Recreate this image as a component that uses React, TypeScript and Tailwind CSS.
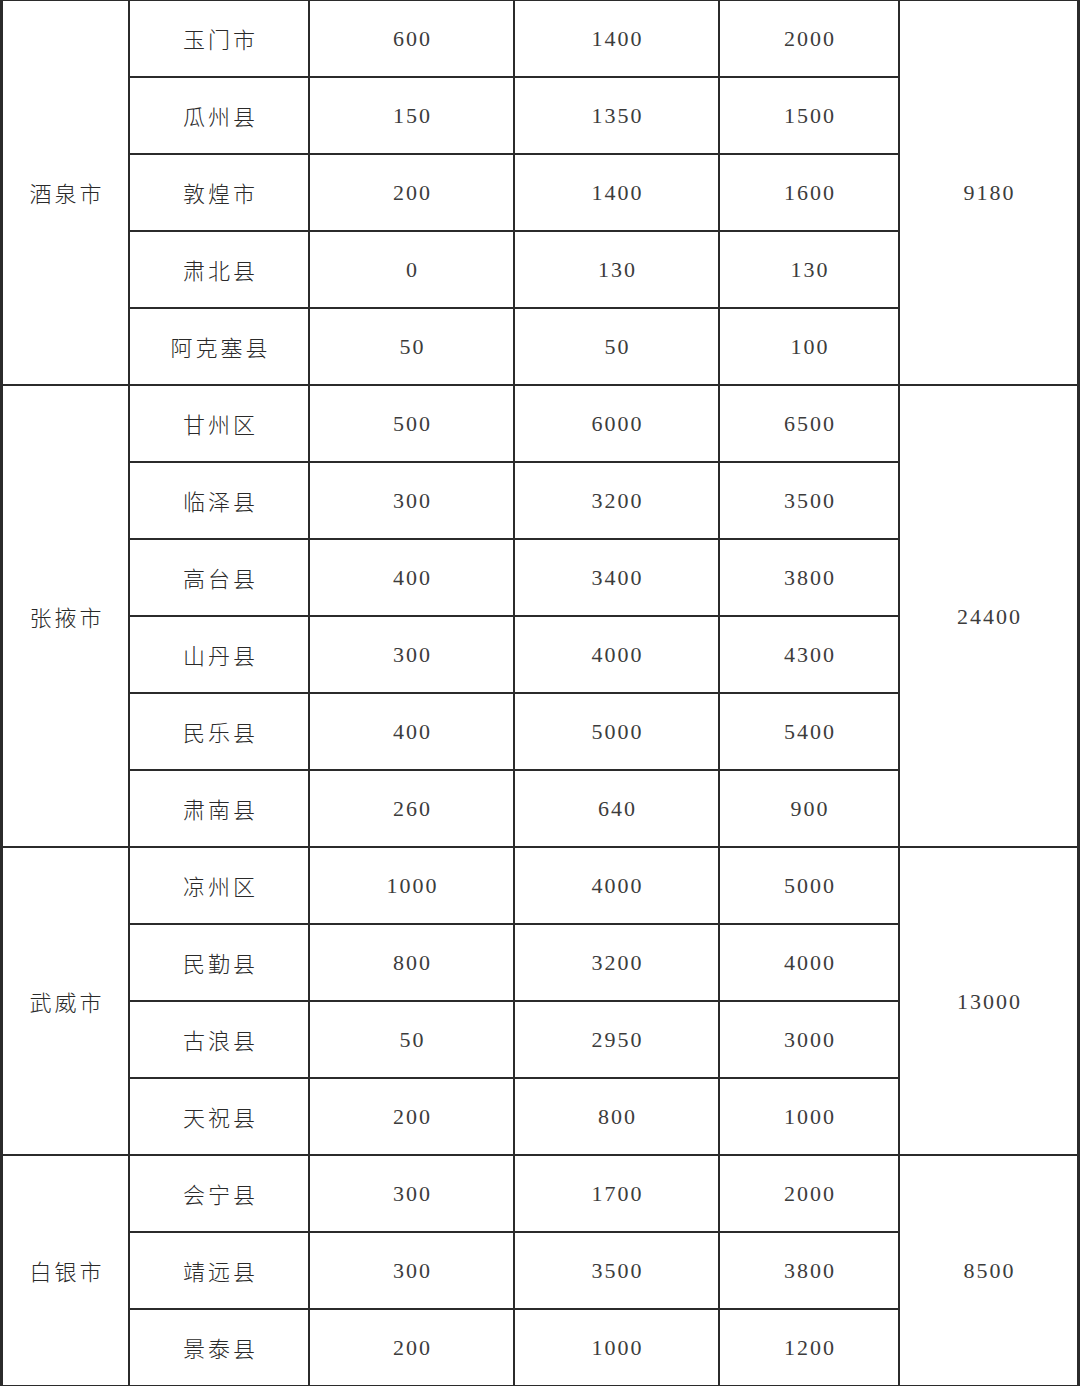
type Group = {
  city: string;
  total: string;
  rows: [string, string, string, string][];
};

const groups: Group[] = [
  {
    city: "酒泉市",
    total: "9180",
    rows: [
      ["玉门市", "600", "1400", "2000"],
      ["瓜州县", "150", "1350", "1500"],
      ["敦煌市", "200", "1400", "1600"],
      ["肃北县", "0", "130", "130"],
      ["阿克塞县", "50", "50", "100"],
    ],
  },
  {
    city: "张掖市",
    total: "24400",
    rows: [
      ["甘州区", "500", "6000", "6500"],
      ["临泽县", "300", "3200", "3500"],
      ["高台县", "400", "3400", "3800"],
      ["山丹县", "300", "4000", "4300"],
      ["民乐县", "400", "5000", "5400"],
      ["肃南县", "260", "640", "900"],
    ],
  },
  {
    city: "武威市",
    total: "13000",
    rows: [
      ["凉州区", "1000", "4000", "5000"],
      ["民勤县", "800", "3200", "4000"],
      ["古浪县", "50", "2950", "3000"],
      ["天祝县", "200", "800", "1000"],
    ],
  },
  {
    city: "白银市",
    total: "8500",
    rows: [
      ["会宁县", "300", "1700", "2000"],
      ["靖远县", "300", "3500", "3800"],
      ["景泰县", "200", "1000", "1200"],
    ],
  },
];

const cjk = "bg-white flex items-center justify-center pl-[3px] text-[22px] font-light tracking-[3px] text-[#2a2a2a] [font-family:'Noto_Sans_CJK_SC',sans-serif]";
const num = "bg-white flex items-center justify-center pl-[2px] text-[22px] tracking-[2px] text-[#3c3c3c] [font-family:'Liberation_Serif',serif]";

const spanClass: Record<number, string> = {
  3: "row-span-3",
  4: "row-span-4",
  5: "row-span-5",
  6: "row-span-6",
};

export default function App() {
  return (
    <div className="w-[1080px] h-[1386px] bg-white">
      <div className="grid grid-cols-[125px_178px_203px_203px_178px_177px] auto-rows-[75px] gap-[2px] bg-[#2b2b2b] border-l-[3px] border-r-[3px] border-t border-b border-[#2b2b2b]">
        {groups.map((g) =>
          g.rows.map((r, i) => (
            <div key={g.city + r[0]} className="contents">
              {i === 0 && (
                <div className={`${cjk} col-start-1 ${spanClass[g.rows.length]}`}>
                  {g.city}
                </div>
              )}
              <div className={`${cjk} col-start-2`}>{r[0]}</div>
              <div className={num}>{r[1]}</div>
              <div className={num}>{r[2]}</div>
              <div className={num}>{r[3]}</div>
              {i === 0 && (
                <div className={`${num} col-start-6 ${spanClass[g.rows.length]}`}>
                  {g.total}
                </div>
              )}
            </div>
          ))
        )}
      </div>
    </div>
  );
}
